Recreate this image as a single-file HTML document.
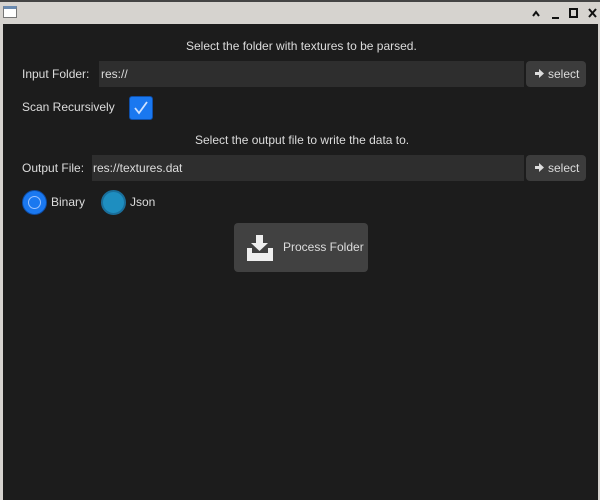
<!DOCTYPE html>
<html><head><style>
body{margin:0;width:600px;height:500px;background:#d6d3cf;position:relative;overflow:hidden;font-family:"Liberation Sans",sans-serif;font-size:12px;color:#dcdcdc}
.t{position:absolute;white-space:nowrap}
#win{position:absolute;left:3px;top:24px;width:595px;height:476px;background:#1c1c1c}
.f{position:absolute;background:#2e2e2e;height:26px}
.b{position:absolute;background:#3c3c3c;border-radius:4px;height:26px}
</style></head><body>
<div style="position:absolute;left:0;top:0;width:600px;height:2px;background:#444"></div>
<div style="position:absolute;left:3px;top:6px;width:14px;height:12px;background:#fff;border:1px solid #777;border-top:3px solid #6a8ab0;box-sizing:border-box"></div>
<svg style="position:absolute;left:528px;top:6px" width="72" height="14">
<path d="M5 10 L8 6 L11 10" stroke="#111" stroke-width="2" fill="none"/>
<path d="M24 12 H31" stroke="#111" stroke-width="2"/>
<rect x="42" y="3" width="7" height="8" stroke="#111" stroke-width="2" fill="none"/>
<path d="M61 3 L68 11 M68 3 L61 11" stroke="#111" stroke-width="2"/>
</svg>
<div id="win"></div>
<div class="t" style="left:186px;top:39px">Select the folder with textures to be parsed.</div>
<div class="t" style="left:22px;top:67px">Input Folder:</div>
<div class="f" style="left:99px;top:61px;width:425px"></div>
<div class="t" style="left:101px;top:67px">res://</div>
<div class="b" style="left:526px;top:61px;width:60px"></div>
<svg style="position:absolute;left:535px;top:69px" width="9" height="9"><path d="M0 3h4V0l5 4.5L4 9V6H0z" fill="#ddd"/></svg>
<div class="t" style="left:548px;top:67px">select</div>
<div class="t" style="left:22px;top:100px">Scan Recursively</div>
<div style="position:absolute;left:129px;top:96px;width:24px;height:24px;background:#1a78f0;border:1px solid #0f4fa8;border-radius:3px;box-sizing:border-box"></div>
<svg style="position:absolute;left:132px;top:99px" width="18" height="18"><path d="M3 9 L7 14 L15 3" stroke="#cfe2ff" stroke-width="1.8" fill="none"/></svg>
<div class="t" style="left:195px;top:133px">Select the output file to write the data to.</div>
<div class="t" style="left:22px;top:161px">Output File:</div>
<div class="f" style="left:92px;top:155px;width:432px"></div>
<div class="t" style="left:93px;top:161px">res://textures.dat</div>
<div class="b" style="left:526px;top:155px;width:60px"></div>
<svg style="position:absolute;left:535px;top:163px" width="9" height="9"><path d="M0 3h4V0l5 4.5L4 9V6H0z" fill="#ddd"/></svg>
<div class="t" style="left:548px;top:161px">select</div>
<div style="position:absolute;left:22px;top:190px;width:25px;height:25px;border-radius:50%;background:#1a78f0;border:1px solid #0d4aa0;box-sizing:border-box"></div>
<div style="position:absolute;left:28px;top:196px;width:13px;height:13px;border-radius:50%;border:1.5px solid #9cc4ff;box-sizing:border-box"></div>
<div class="t" style="left:51px;top:195px">Binary</div>
<div style="position:absolute;left:101px;top:190px;width:25px;height:25px;border-radius:50%;background:#1e8ec0;border:2px solid #1a6e9a;box-sizing:border-box"></div>
<div class="t" style="left:130px;top:195px">Json</div>
<div class="b" style="left:234px;top:223px;width:134px;height:49px;background:#414141"></div>
<svg style="position:absolute;left:246px;top:234px" width="28" height="28"><path d="M10 1h7v8h5l-8.5 8L5 9h5z" fill="#eee"/><path d="M1 14h5v5h16v-5h5v13H1z" fill="#eee"/></svg>
<div class="t" style="left:283px;top:240px">Process Folder</div>
</body></html>
